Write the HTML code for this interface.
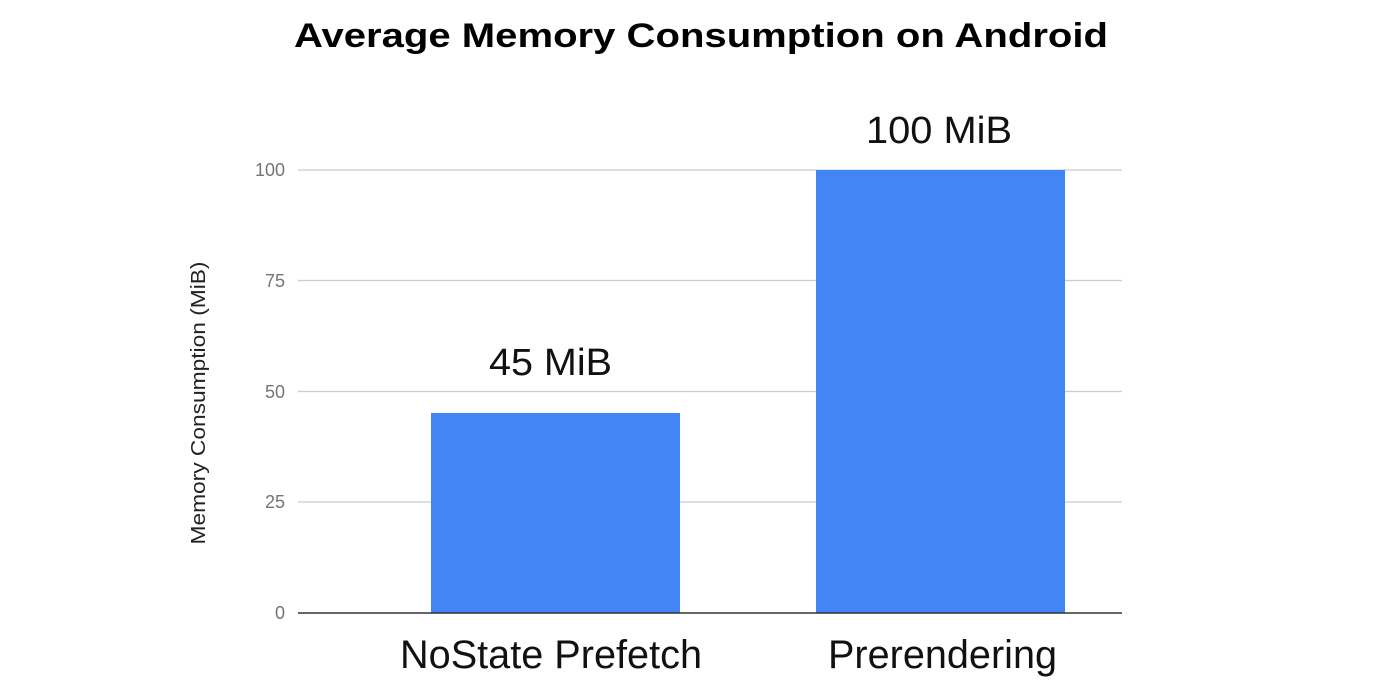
<!DOCTYPE html>
<html><head><meta charset="utf-8"><style>html,body{margin:0;padding:0;background:#fff}svg{display:block}</style></head>
<body>
<svg width="1400" height="700" xmlns="http://www.w3.org/2000/svg" font-family="Liberation Sans, Arial, sans-serif">
<rect width="1400" height="700" fill="#fff"/>
<text x="701" y="47" text-anchor="middle" font-size="34" font-weight="bold" fill="#000" textLength="814" lengthAdjust="spacingAndGlyphs">Average Memory Consumption on Android</text>
<g stroke="#cccccc" stroke-width="1.3">
<line x1="298" y1="170" x2="1122" y2="170"/>
<line x1="298" y1="280.5" x2="1122" y2="280.5"/>
<line x1="298" y1="391.5" x2="1122" y2="391.5"/>
<line x1="298" y1="502" x2="1122" y2="502"/>
</g>
<rect x="431" y="413" width="249" height="200" fill="#4285f4"/>
<rect x="816" y="170" width="249" height="443" fill="#4285f4"/>
<line x1="298" y1="613" x2="1122" y2="613" stroke="#333" stroke-width="1.5"/>
<g font-size="18" fill="#757575" text-anchor="end">
<text x="285" y="176">100</text>
<text x="285" y="287">75</text>
<text x="285" y="398">50</text>
<text x="285" y="508">25</text>
<text x="285" y="619">0</text>
</g>
<text transform="translate(205,403) rotate(-90)" text-anchor="middle" font-size="20" fill="#222" textLength="283" lengthAdjust="spacingAndGlyphs">Memory Consumption (MiB)</text>
<text x="550.5" y="375" text-anchor="middle" font-size="38" fill="#111" textLength="123" lengthAdjust="spacingAndGlyphs">45 MiB</text>
<text x="939" y="143" text-anchor="middle" font-size="38" fill="#111" textLength="146" lengthAdjust="spacingAndGlyphs">100 MiB</text>
<text x="551" y="668" text-anchor="middle" font-size="40" fill="#111" textLength="302" lengthAdjust="spacingAndGlyphs">NoState Prefetch</text>
<text x="942.5" y="668" text-anchor="middle" font-size="40" fill="#111" textLength="229" lengthAdjust="spacingAndGlyphs">Prerendering</text>
</svg>
</body></html>
